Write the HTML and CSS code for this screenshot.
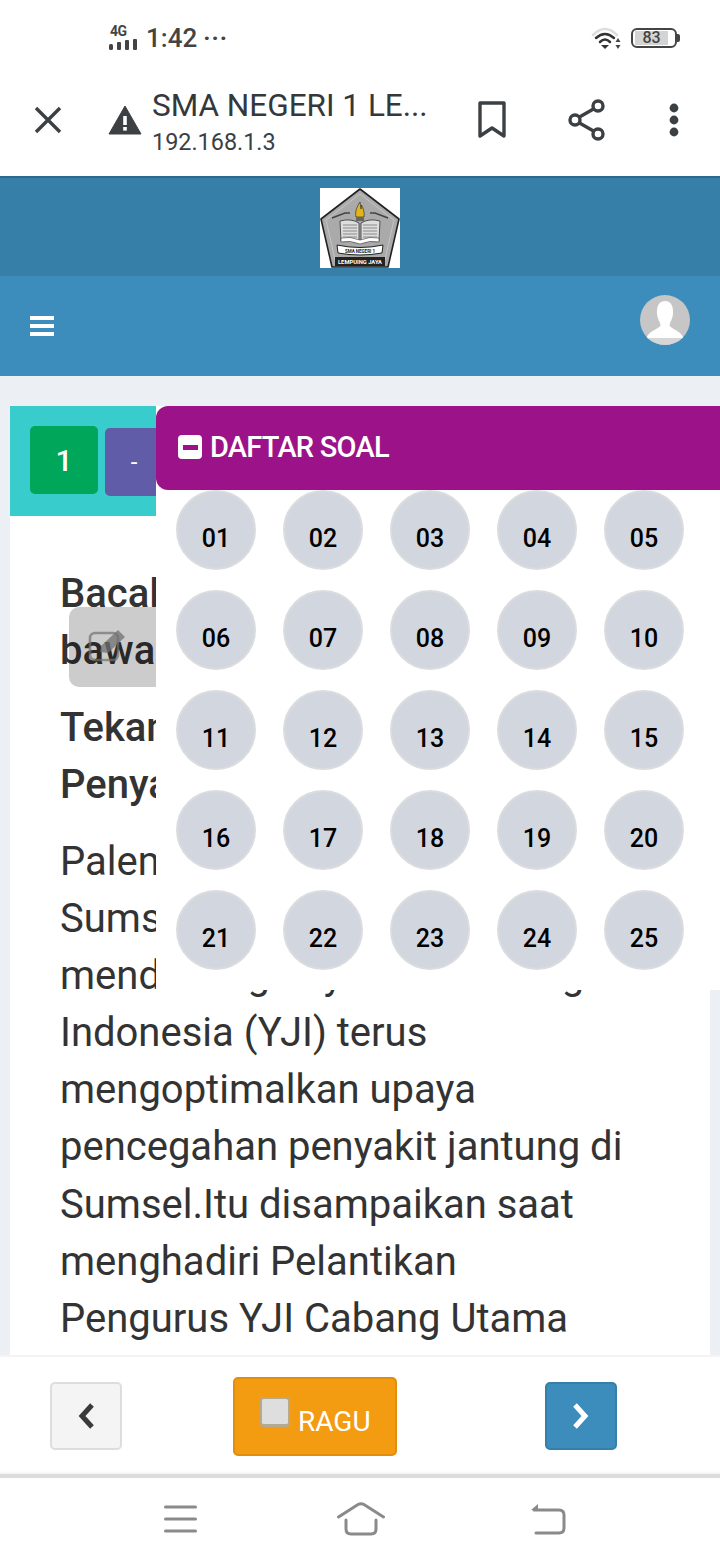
FILE: index.html
```html
<!DOCTYPE html>
<html lang="id">
<head>
<meta charset="utf-8">
<title>SMA Negeri 1 Lempuing Jaya</title>
<link rel="stylesheet" href="styles.css">
</head>
<body>
<div class="phone">
  <div class="status">
    <div class="status-left">
      <div class="signal">
        <span class="net">4G</span>
        <svg class="bars" width="28" height="11" viewBox="0 0 28 11"><g fill="#444"><rect x="0" y="5" width="4" height="6" rx="1.500"/><rect x="8" y="3" width="4" height="8" rx="1"/><rect x="16" y="1" width="4" height="10" rx="1"/><rect x="24" y="0" width="4" height="11" rx="1"/></g></svg>
      </div>
      <span class="clock">1:42</span>
      <span class="dots">···</span>
    </div>
    <div class="status-right">
      <svg width="32" height="24" viewBox="0 0 32 24"><g fill="none" stroke-linecap="round"><path d="M2 9 Q14 -3 26 9" stroke="#ddd" stroke-width="2.5"/><path d="M5 12 Q14 4 23 12" stroke="#333" stroke-width="2.5"/><path d="M9 16 Q14 11 19 16" stroke="#333" stroke-width="2.5"/></g><path d="M10 19 H18 L14 23 Z" fill="#333"/><path d="M27 12 l2.5 4 h-5z M27 23 l2.5 -4 h-5z" fill="#444"/></svg>
      <div class="battery"><span class="level">83</span></div>
    </div>
  </div>

  <div class="toolbar">
    <svg class="close" width="30" height="30" viewBox="0 0 30 30"><path d="M3 3 L27 27 M27 3 L3 27" stroke="#3c4043" stroke-width="3.4" fill="none"/></svg>
    <svg class="warn" width="34" height="30" viewBox="0 0 34 30"><path d="M17 1 L33 29 H1 Z" fill="#3c4043" stroke="#3c4043" stroke-linejoin="round"/><rect x="15.2" y="11" width="3.6" height="9" fill="#fff"/><rect x="15.2" y="22" width="3.6" height="3.6" fill="#fff"/></svg>
    <div class="address">
      <div class="site-title">SMA NEGERI 1 LE...</div>
      <div class="site-url">192.168.1.3</div>
    </div>
    <svg class="bookmark" width="30" height="38" viewBox="0 0 30 38"><path d="M3 2 H27 V35 L15 27 L3 35 Z" fill="none" stroke="#3c4043" stroke-width="3.4" stroke-linejoin="round"/></svg>
    <svg class="share" width="38" height="42" viewBox="0 0 38 42"><g fill="none" stroke="#3c4043" stroke-width="3.4"><circle cx="30" cy="7" r="5"/><circle cx="7" cy="21" r="5"/><circle cx="30" cy="35" r="5"/><path d="M11.5 18 L25.5 10 M11.5 24 L25.5 32"/></g></svg>
    <svg class="more" width="12" height="34" viewBox="0 0 12 34"><g fill="#3c4043"><circle cx="6" cy="5" r="4.4"/><circle cx="6" cy="17" r="4.4"/><circle cx="6" cy="29" r="4.4"/></g></svg>
  </div>

  <header class="logo-bar">
    <svg class="logo" width="80" height="80" viewBox="0 0 80 80">
      <rect width="80" height="80" fill="#fff"/>
      <path d="M40 1 L79 31 L68 79 H12 L1 31 Z" fill="#aaa" stroke="#222" stroke-width="1.600" stroke-linejoin="round"/>
      <path d="M40 6 L74 32 L64 76 H16 L6 32 Z" fill="none" stroke="#ccc" stroke-width=".8"/>
      <path d="M12 30 L25 25 H30 M68 30 L55 25 H50" stroke="#444" stroke-width="1.500" fill="none"/>
      <path d="M40 14 C36 20 35 25 36 29 H44 C45 25 43 20 41.500 17 L41 21 Z" fill="#e4b416" stroke="#333" stroke-width=".7"/>
      <rect x="36" y="29" width="8" height="4" fill="#666"/>
      <path d="M20 33 Q31 30 39 35 V53 Q30 49 21 53 Z M60 33 Q49 30 41 35 V53 Q50 49 59 53 Z" fill="#ddd" stroke="#333" stroke-width=".8"/>
      <path d="M23 37 H37 M23 40 H37 M23 43 H37 M23 46 H37 M23 49 H37 M43 37 H57 M43 40 H57 M43 43 H57 M43 46 H57 M43 49 H57" stroke="#777" stroke-width=".8"/>
      <path d="M21 50 Q30 48 40 52 Q50 48 59 50 V54 Q50 52 40 56 Q30 52 21 54 Z" fill="#fff" stroke="#333" stroke-width=".6"/>
      <path d="M17 57 Q40 62 63 57 L62 65 Q40 69 18 65 Z" fill="#fff" stroke="#222"/>
      <text class="logo-sub" x="40" y="64.500" text-anchor="middle">SMA NEGERI 1</text>
      <rect x="15" y="69" width="50" height="9" fill="#222"/>
      <text class="logo-name" x="40" y="76" text-anchor="middle">LEMPUING JAYA</text>
    </svg>
  </header>

  <nav class="navbar">
    <div class="burger"><i></i><i></i><i></i></div>
    <svg class="avatar" width="50" height="50" viewBox="0 0 50 50"><defs><clipPath id="av"><circle cx="25" cy="25" r="25"/></clipPath></defs><g clip-path="url(#av)"><rect width="50" height="50" fill="#c6c6c6"/><path d="M25 6 C32 6 33.500 13 33 19 C32.500 24 30 27 29.500 30 C30 34 41 35 44 44 H6 C9 35 20 34 20.500 30 C20 27 17.500 24 17 19 C16.500 13 18 6 25 6Z" fill="#fff"/><rect y="43" width="50" height="7" fill="#d6d6d6"/></g></svg>
  </nav>

  <main class="content">
    <section class="card">
      <div class="card-head">
        <span class="num">1</span>
        <span class="flag">-</span>
      </div>
      <div class="card-body">
        <div class="edit-box">
          <svg width="40" height="34" viewBox="0 0 40 34"><rect x="2" y="4" width="28" height="27" rx="5" fill="none" stroke="#707070" stroke-opacity=".7" stroke-width="2.600"/><path d="M12 23 L13 17 L30 1 L37 8 L20 24 Z" fill="#707070" fill-opacity=".75"/></svg>
        </div>
        <h2 class="heading">Bacalah teks di<br>bawah ini!</h2>
        <h2 class="heading">Tekanan Darah<br>Penyakit Jantung</h2>
        <p class="para">Palembang,<br>Sumsel Herman Deru<br>mendukung Yayasan Jantung<br>Indonesia (YJI) terus<br>mengoptimalkan upaya<br>pencegahan penyakit jantung di<br>Sumsel.Itu disampaikan saat<br>menghadiri Pelantikan<br>Pengurus YJI Cabang Utama</p>
      </div>
    </section>

    <aside class="panel">
      <div class="panel-head">
        <span class="minus"><i></i></span>
        <span>DAFTAR SOAL</span>
      </div>
      <div class="grid">
        <span class="ball">01</span><span class="ball">02</span><span class="ball">03</span><span class="ball">04</span><span class="ball">05</span>
        <span class="ball">06</span><span class="ball">07</span><span class="ball">08</span><span class="ball">09</span><span class="ball">10</span>
        <span class="ball">11</span><span class="ball">12</span><span class="ball">13</span><span class="ball">14</span><span class="ball">15</span>
        <span class="ball">16</span><span class="ball">17</span><span class="ball">18</span><span class="ball">19</span><span class="ball">20</span>
        <span class="ball">21</span><span class="ball">22</span><span class="ball">23</span><span class="ball">24</span><span class="ball">25</span>
      </div>
    </aside>
  </main>

  <footer class="actions">
    <button class="btn prev"><svg width="18" height="26" viewBox="0 0 18 26"><path d="M15 2 L5 13 L15 24" fill="none" stroke="#3a3a3a" stroke-width="5"/></svg></button>
    <button class="btn ragu"><span class="check"></span><span class="ragu-text">RAGU</span></button>
    <button class="btn next"><svg width="18" height="26" viewBox="0 0 18 26"><path d="M3 2 L13 13 L3 24" fill="none" stroke="#fff" stroke-width="5"/></svg></button>
  </footer>

  <div class="softkeys">
    <svg width="33" height="30" viewBox="0 0 33 30"><path d="M1.500 3 H31.500 M1.500 15 H31.500 M1.500 27 H31.500" stroke="#8a8a8a" stroke-width="3" stroke-linecap="round"/></svg>
    <svg width="48" height="34" viewBox="0 0 48 34"><path d="M1.500 15 L21 2.500 Q24 1 27 2.500 L46.500 15 M9 18 V27 Q9 32 14 32 H34 Q39 32 39 27 V18" fill="none" stroke="#8a8a8a" stroke-width="3" stroke-linecap="round"/></svg>
    <svg class="back" width="36" height="32" viewBox="0 0 36 32"><path d="M4 7 H29 Q34 7 34 12 V25 Q34 30 29 30 H6" fill="none" stroke="#8a8a8a" stroke-width="3" stroke-linecap="round"/><path d="M1 7 L8 1 V7Z" fill="#8a8a8a"/></svg>
  </div>
</div>
</body>
</html>
```
FILE: styles.css
```css
* { box-sizing: border-box; }
html, body { margin: 0; padding: 0; }
body { font-family: Roboto, "Noto Sans", sans-serif; background: #fff; }
.phone { width: 720px; height: 1560px; display: flex; flex-direction: column; overflow: hidden; background: #fff; }

.status { height: 76px; flex: none; display: flex; justify-content: space-between; align-items: flex-start; padding: 24px 42px 0 109px; color: #444; }
.status-left { display: flex; align-items: center; height: 28px; }
.signal { display: flex; flex-direction: column; width: 28px; height: 26px; }
.net { font-size: 14px; line-height: 12px; font-weight: 700; color: #444; letter-spacing: -.6px; padding-left: 1px; }
.bars { margin-top: 2px; }
.clock { font-size: 26px; font-weight: 500; color: #444; margin-left: 9px; line-height: 28px; }
.dots { font-size: 24px; font-weight: 700; line-height: 24px; margin-left: 6px; color: #444; letter-spacing: 1px; }
.status-right { display: flex; align-items: center; gap: 8px; margin-top: 2px; }
.battery { width: 46px; height: 20px; border: 2px solid #444; border-radius: 6px; padding: 1px; position: relative; margin-right: 1px; }
.battery::after { content: ""; position: absolute; right: -5px; top: 4px; width: 3px; height: 8px; background: #444; border-radius: 0 2px 2px 0; }
.level { display: block; width: 33px; height: 14px; margin-left: 1px; background: #d4d4d4; color: #444; font-size: 16px; font-weight: 500; line-height: 14px; text-align: center; }

.toolbar { height: 100px; flex: none; display: flex; align-items: center; padding: 0 0 12px 33px; }
.close { flex: none; }
.warn { flex: none; margin-left: 45px; }
.address { width: 300px; margin-left: 10px; flex: none; color: #3c4043; margin-top: 6px; }
.site-title { font-size: 31.500px; line-height: 38px; font-weight: 400; color: #35383b; white-space: nowrap; }
.site-url { font-size: 23.400px; line-height: 34px; color: #3c4043; }
.bookmark { flex: none; margin-left: 25px; }
.share { flex: none; margin-left: 61px; }
.more { flex: none; margin-left: 62px; }

.logo-bar { height: 100px; flex: none; background: #367fa9; border-top: 2px solid #2c6a8e; display: flex; justify-content: center; padding-top: 10px; }
.logo { display: block; }
.logo-sub { font-family: Roboto, sans-serif; font-size: 4.500px; font-weight: 700; fill: #222; }
.logo-name { font-family: Roboto, sans-serif; font-size: 5.800px; font-weight: 700; fill: #fff; }

.navbar { height: 100px; flex: none; background: #3c8dbc; display: flex; justify-content: space-between; align-items: flex-start; padding: 19px 30px 0 30px; }
.burger { display: flex; flex-direction: column; gap: 4px; width: 24px; margin-top: 21px; }
.burger i { display: block; height: 4px; background: #fff; }

.content { flex: 1; min-height: 0; background: #ecf0f5; padding: 30px 10px 0; position: relative; overflow: hidden; }
.card { background: #fff; height: 100%; overflow: hidden; }
.card-head { height: 110px; background: #39cccc; display: flex; align-items: flex-start; gap: 7px; padding: 20px 20px 0; }
.num { width: 68px; height: 68px; background: #00a65a; border-radius: 5px; color: #fff; font-size: 30px; font-weight: 500; display: flex; align-items: center; justify-content: center; }
.flag { width: 58px; height: 68px; margin-top: 2px; background: #605ca8; border-radius: 5px; color: #fff; font-size: 24px; display: flex; align-items: center; justify-content: center; flex: none; }
.card-body { padding: 49px 30px 0 50px; position: relative; color: #333; }
.heading { margin: 0 0 20px; font-size: 40px; line-height: 57px; font-weight: 500; color: #333; white-space: nowrap; }
.para { margin: 1px 0 0; font-size: 40px; line-height: 57.100px; font-weight: 400; color: #333; white-space: nowrap; }
.edit-box { position: absolute; left: 59px; top: 91px; width: 110px; height: 80px; background: rgba(0, 0, 0, .2); border-radius: 10px; padding: 22px 0 0 19px; }
.edit-box svg { display: block; }

.panel { position: absolute; left: 156px; right: 0; top: 30px; height: 584px; background: #fff; }
.panel-head { height: 84px; background: #9c1288; color: #fff; border-radius: 12px 0 0 12px; display: flex; align-items: center; gap: 8px; padding-left: 22px; padding-bottom: 2px; font-size: 29px; font-weight: 500; letter-spacing: -.77px; }
.minus { width: 24px; height: 24px; border-radius: 4px; background: #fff; display: flex; align-items: center; justify-content: center; }
.minus i { display: block; width: 15px; height: 5px; background: #9c1288; }
.grid { display: grid; grid-template-columns: repeat(5, 80px); column-gap: 27px; row-gap: 20px; padding-left: 20px; }
.ball { width: 80px; height: 80px; border-radius: 50%; background: #d2d6de; border: 2px solid #dadcdf; color: #000; font-size: 25px; font-weight: 500; display: flex; justify-content: center; padding-top: 32px; line-height: 30px; }

.actions { height: 123px; flex: none; background: #fff; border-top: 2px solid #f4f4f4; border-bottom: 4px solid #dcdcdf; display: flex; align-items: flex-start; padding-left: 50px; box-shadow: inset 0 -3px 3px -2px #eee; }
.btn { padding: 0; font-family: inherit; display: flex; align-items: center; justify-content: center; }
.prev { width: 72px; height: 68px; margin-top: 25px; background: #f4f4f4; border: 2px solid #ddd; border-radius: 5px; }
.ragu { width: 164px; height: 79px; margin: 20px 0 0 111px; background: #f39c12; border: 2px solid #e08e0b; border-radius: 5px; color: #fff; font-size: 28px; gap: 8px; justify-content: flex-start; padding-left: 25px; }
.check { width: 30px; height: 30px; background: #dedede; border: 2px solid #b5a98f; border-bottom-width: 3px; border-radius: 4px; margin-top: -10px; flex: none; }
.ragu-text { margin-top: 10px; }
.next { width: 72px; height: 68px; margin: 25px 0 0 148px; background: #3c8dbc; border: 2px solid #367fa9; border-radius: 5px; }

.softkeys { height: 82px; flex: none; background: #fff; display: flex; align-items: center; padding: 0 0 0 164px; gap: 140px; }
.softkeys svg { display: block; flex: none; }
.softkeys .back { margin-left: 5px; }
```
